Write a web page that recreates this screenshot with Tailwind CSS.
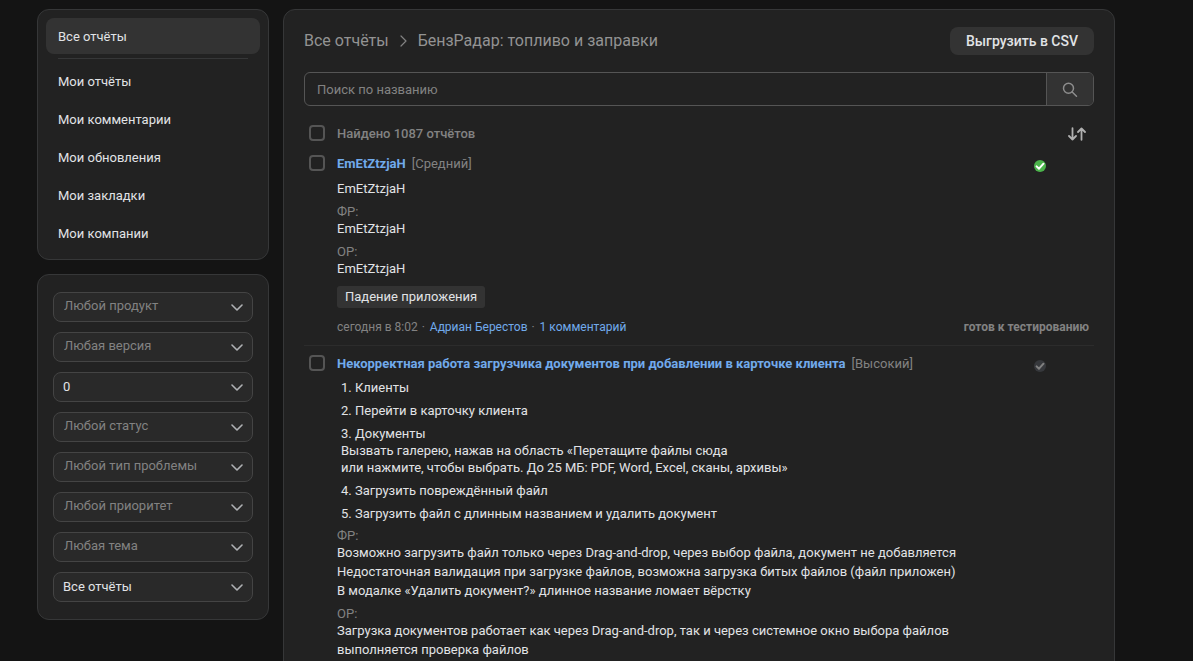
<!DOCTYPE html>
<html lang="ru">
  <head>
    <meta charset="UTF-8" />
    <meta name="viewport" content="width=device-width, initial-scale=1.0" />
    <title>БензРадар: топливо и заправки</title>
    <script src="https://cdn.jsdelivr.net/npm/@tailwindcss/browser@4"></script>
  </head>
  <body class="bg-[#141414] font-['Roboto',sans-serif] text-[13px] text-[#e1e3e6]">
    <div class="flex items-start gap-[14px] pt-[9px] pl-[37px] pr-[78px]">
      <!-- Sidebar -->
      <aside class="flex w-[232px] shrink-0 flex-col gap-[14px]">
        <nav class="flex flex-col gap-[2px] rounded-xl border border-[#363738] bg-[#222] p-2">
          <a href="#" class="flex h-9 items-center rounded-lg bg-[#333] px-3 pt-[2px]">Все отчёты</a>
          <hr class="mx-3 my-[2px] border-[#363738]" />
          <a href="#" class="flex h-9 items-center px-3 pt-[2px]">Мои отчёты</a>
          <a href="#" class="flex h-9 items-center px-3 pt-[2px]">Мои комментарии</a>
          <a href="#" class="flex h-9 items-center px-3 pt-[2px]">Мои обновления</a>
          <a href="#" class="flex h-9 items-center px-3 pt-[2px]">Мои закладки</a>
          <a href="#" class="flex h-9 items-center px-3 pt-[2px]">Мои компании</a>
        </nav>

        <form id="filters" class="flex flex-col gap-[10px] rounded-xl border border-[#363738] bg-[#222] px-[15px] py-[17px]"></form>
      </aside>

      <!-- Reports -->
      <main class="min-w-0 flex-1 rounded-xl border border-[#363738] bg-[#222] px-5 pt-[17px] pb-5">
        <header class="flex h-7 items-center justify-between">
          <div class="flex items-center text-base text-[#939393]">
            <a href="#">Все отчёты</a>
            <svg class="mx-[11px] h-3 w-[7px]" viewBox="0 0 7 12" fill="none" stroke="#828282" stroke-width="1.2" stroke-linecap="round" stroke-linejoin="round">
              <path d="M1 1l5 5-5 5" />
            </svg>
            <h1>БензРадар: топливо и заправки</h1>
          </div>
          <button type="button" class="h-7 rounded-lg bg-[#333] px-4 text-sm font-medium">Выгрузить в CSV</button>
        </header>

        <form class="mt-[17px] flex h-[34px] overflow-hidden rounded-md border border-[#555]">
          <input type="text" aria-label="Поиск по названию" placeholder="Поиск по названию" class="min-w-0 flex-1 bg-transparent px-3 pt-[2px] outline-none placeholder:text-[#828282]" />
          <button type="button" aria-label="Найти" class="flex w-[47px] items-center justify-center border-l border-[#555] bg-[#333] pt-[2px]">
            <svg class="h-4 w-4" viewBox="0 0 16 16" fill="none" stroke="#8c8c8c" stroke-width="1.5" stroke-linecap="round">
              <circle cx="6.5" cy="6.3" r="5" />
              <path d="M10.2 10l4.3 4.3" />
            </svg>
          </button>
        </form>

        <div class="mt-[18px] mb-1 flex h-[18px] items-center pl-[5px]">
          <input type="checkbox" id="all" class="mr-3 h-4 w-4 appearance-none rounded-[4px] border-2 border-[#555]" />
          <label for="all" class="pt-[2px] font-medium text-[#828282]">Найдено 1087 отчётов</label>
          <button type="button" aria-label="Сортировка" class="mr-2 ml-auto pt-[2px]">
            <svg class="h-[14px] w-[18px]" viewBox="0 0 18 14" fill="none" stroke="#b0b0b0" stroke-width="1.8" stroke-linecap="round" stroke-linejoin="round">
              <path d="M4.5 1.2v11.3M1 9l3.5 3.5L8 9" />
              <path d="M13.5 12.8V1.5M10 5l3.5-3.5L17 5" />
            </svg>
          </button>
        </div>

        <article class="flex border-b border-[#2c2c2c] pt-2 pb-[10px] pl-[5px]">
          <input type="checkbox" aria-label="EmEtZtzjaH" class="mt-[1px] mr-3 h-4 w-4 shrink-0 appearance-none rounded-[4px] border-2 border-[#555]" />
          <div class="min-w-0 flex-1 leading-[19px]">
            <div class="flex items-center">
              <a href="#" class="font-bold text-[#71aaeb]">EmEtZtzjaH</a>
              <span class="ml-[6px] text-[#828282]">[Средний]</span>
              <svg class="mt-1 mr-12 ml-auto h-3 w-3" viewBox="0 0 12 12" fill="none">
                <circle cx="6" cy="6" r="6" fill="#4bb34b" />
                <path d="M2.6 6.4l2.4 2.3 4.5-5" stroke="#fff" stroke-width="2" stroke-linecap="round" stroke-linejoin="round" />
              </svg>
            </div>
            <p class="mt-[6px]">EmEtZtzjaH</p>
            <h3 class="mt-[6px] leading-[15px] text-[#828282]">ФР:</h3>
            <p>EmEtZtzjaH</p>
            <h3 class="mt-[6px] leading-[15px] text-[#828282]">ОР:</h3>
            <p>EmEtZtzjaH</p>
            <a href="#" class="mt-2 flex h-[22px] w-fit items-center rounded-[3px] bg-[#333] px-2 pb-[2px]">Падение приложения</a>
            <div class="mt-[11px] flex items-center justify-between pr-[5px] text-[12px] leading-4 text-[#828282]">
              <p>
                сегодня в 8:02
                <span class="mr-[2px] ml-[1px]">·</span>
                <a href="#" class="text-[#71aaeb]">Адриан Берестов</a>
                <span class="mr-[2px] ml-[1px]">·</span>
                <a href="#" class="text-[#71aaeb]">1 комментарий</a>
              </p>
              <span class="font-bold">готов к тестированию</span>
            </div>
          </div>
        </article>

        <article class="flex pt-2 pb-[10px] pl-[5px]">
          <input type="checkbox" aria-label="Некорректная работа загрузчика документов" class="mt-[1px] mr-3 h-4 w-4 shrink-0 appearance-none rounded-[4px] border-2 border-[#555]" />
          <div class="min-w-0 flex-1 leading-[19px]">
            <div class="flex items-center">
              <a href="#" class="font-bold text-[#71aaeb]">Некорректная работа загрузчика документов при добавлении в карточке клиента</a>
              <span class="ml-[6px] text-[#828282]">[Высокий]</span>
              <svg class="mt-1 mr-12 ml-auto h-3 w-3" viewBox="0 0 12 12" fill="none">
                <circle cx="6" cy="6" r="6" fill="#36383c" />
                <path d="M2.6 6.4l2.4 2.3 4.5-5" stroke="#808080" stroke-width="2" stroke-linecap="round" stroke-linejoin="round" />
              </svg>
            </div>
            <ol class="mt-[6px] flex list-inside list-decimal flex-col gap-[6px] pl-1 leading-[17px]">
              <li>Клиенты</li>
              <li>Перейти в карточку клиента</li>
              <li>Документы<br />Вызвать галерею, нажав на область «Перетащите файлы сюда<br />или нажмите, чтобы выбрать. До 25 МБ: PDF, Word, Excel, сканы, архивы»</li>
              <li>Загрузить повреждённый файл</li>
              <li>Загрузить файл с длинным названием и удалить документ</li>
            </ol>
            <h3 class="mt-[6px] leading-[15px] text-[#828282]">ФР:</h3>
            <p>
              Возможно загрузить файл только через Drag-and-drop, через выбор файла, документ не добавляется<br />
              Недостаточная валидация при загрузке файлов, возможна загрузка битых файлов (файл приложен)<br />
              В модалке «Удалить документ?» длинное название ломает вёрстку
            </p>
            <h3 class="mt-[6px] leading-[15px] text-[#828282]">ОР:</h3>
            <p>
              Загрузка документов работает как через Drag-and-drop, так и через системное окно выбора файлов<br />
              выполняется проверка файлов
            </p>
          </div>
        </article>
      </main>
    </div>

    <script>
      const filters = [
        { label: "Продукт", value: "Любой продукт" },
        { label: "Версия", value: "Любая версия" },
        { label: "Количество", value: "0", filled: true },
        { label: "Статус", value: "Любой статус" },
        { label: "Тип проблемы", value: "Любой тип проблемы" },
        { label: "Приоритет", value: "Любой приоритет" },
        { label: "Тема", value: "Любая тема" },
        { label: "Отчёты", value: "Все отчёты", filled: true },
      ];

      document.getElementById("filters").innerHTML = filters
        .map(
          (f) => `
        <div class="grid h-[30px] items-center rounded-lg border border-[#444] bg-[#292929]">
          <select aria-label="${f.label}" class="col-start-1 row-start-1 h-7 w-full appearance-none outline-none ${f.filled ? "px-[9px] text-[#e1e3e6]" : "px-[10px] pb-[2px] text-[#828282]"}">
            <option>${f.value}</option>
          </select>
          <svg class="pointer-events-none col-start-1 row-start-1 mt-[1px] mr-[9px] h-[7px] w-3 justify-self-end" viewBox="0 0 12 7" fill="none" stroke="#aeb0b3" stroke-width="1.6" stroke-linecap="round" stroke-linejoin="round">
            <path d="M1 1l5 5 5-5" />
          </svg>
        </div>`
        )
        .join("");
    </script>
  </body>
</html>
